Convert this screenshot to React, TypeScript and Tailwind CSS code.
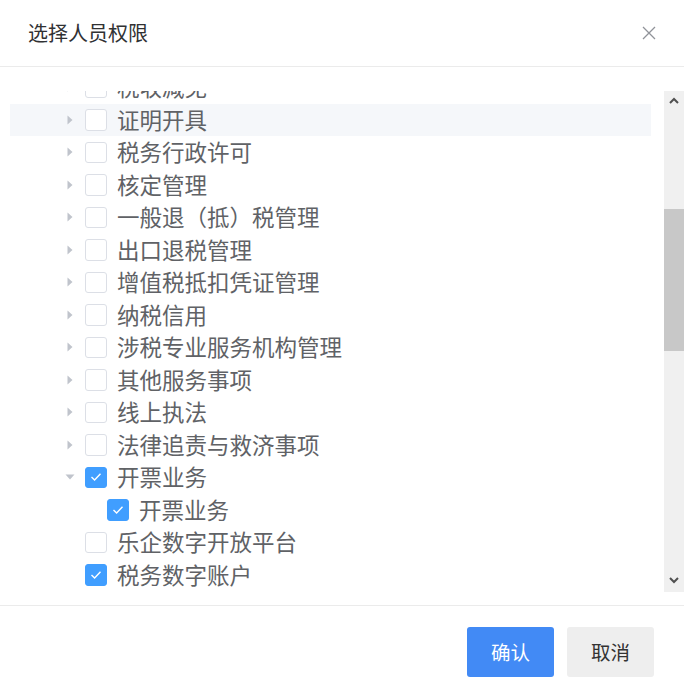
import React from "react";

type Node = {
  label: string;
  checked?: boolean;
  caret?: "right" | "down" | null;
  level?: number;
  active?: boolean;
};

const nodes: Node[] = [
  { label: "税收减免", caret: "right" },
  { label: "证明开具", caret: "right", active: true },
  { label: "税务行政许可", caret: "right" },
  { label: "核定管理", caret: "right" },
  { label: "一般退（抵）税管理", caret: "right" },
  { label: "出口退税管理", caret: "right" },
  { label: "增值税抵扣凭证管理", caret: "right" },
  { label: "纳税信用", caret: "right" },
  { label: "涉税专业服务机构管理", caret: "right" },
  { label: "其他服务事项", caret: "right" },
  { label: "线上执法", caret: "right" },
  { label: "法律追责与救济事项", caret: "right" },
  { label: "开票业务", caret: "down", checked: true },
  { label: "开票业务", caret: null, checked: true, level: 1 },
  { label: "乐企数字开放平台", caret: null },
  { label: "税务数字账户", caret: null, checked: true },
];

function Checkbox({ checked }: { checked?: boolean }) {
  return (
    <span
      className={`flex h-[21.5px] w-[21.5px] shrink-0 items-center justify-center rounded-[3px] border ${
        checked ? "border-[#409eff] bg-[#409eff]" : "border-[#dcdfe6] bg-white"
      }`}
    >
      {checked && (
        <svg width="12" height="10" viewBox="0 0 12 10" fill="none">
          <path d="M1.5 5 L4.6 8 L10.5 1.8" stroke="white" strokeWidth="1.4" />
        </svg>
      )}
    </span>
  );
}

function Caret({ dir }: { dir: "right" | "down" | null }) {
  return (
    <span className="flex w-[24px] shrink-0 items-center justify-center">
      {dir === "right" && (
        <svg width="6" height="10" viewBox="0 0 6 10">
          <path d="M0.5 0.5 L5.5 5 L0.5 9.5 Z" fill="#c0c4cc" />
        </svg>
      )}
      {dir === "down" && (
        <svg width="10" height="6" viewBox="0 0 10 6">
          <path d="M0.5 0.5 L9.5 0.5 L5 5.5 Z" fill="#c0c4cc" />
        </svg>
      )}
    </span>
  );
}

function TreeRow({ node }: { node: Node }) {
  return (
    <div
      className={`flex h-[32.5px] items-center ${
        node.active ? "bg-[#f5f7fa]" : ""
      } ${node.level ? "pl-[70px]" : "pl-[48px]"}`}
    >
      <Caret dir={node.caret ?? null} />
      <span className="ml-[3px]">
        <Checkbox checked={node.checked} />
      </span>
      <span className="-mt-[2px] ml-[10.5px] text-[22.5px] leading-none text-[#606266]">
        {node.label}
      </span>
    </div>
  );
}

function Scrollbar() {
  return (
    <div className="flex w-[20px] shrink-0 flex-col bg-[#f0f0f0]">
      <div className="flex h-[17px] items-center justify-center pt-[1px]">
        <svg width="10" height="7" viewBox="0 0 10 7">
          <path d="M1 6 L5 2 L9 6" stroke="#505050" strokeWidth="2" fill="none" />
        </svg>
      </div>
      <div className="h-[101px]" />
      <div className="h-[142px] bg-[#c8c8c8]" />
      <div className="flex-1" />
      <div className="flex h-[23px] items-center justify-center">
        <svg width="10" height="7" viewBox="0 0 10 7">
          <path d="M1 1 L5 5 L9 1" stroke="#505050" strokeWidth="2" fill="none" />
        </svg>
      </div>
    </div>
  );
}

export default function App() {
  return (
    <div
      className="h-[694px] w-[684px] overflow-hidden bg-white"
      style={{ fontFamily: '"Noto Sans CJK SC", "Noto Sans", sans-serif' }}
    >
      <div className="flex h-[67px] items-center justify-between border-b border-[#ebebeb] pl-[28px] pr-[28px]">
        <span className="text-[20px] leading-none text-[#303133]">选择人员权限</span>
        <svg width="14" height="14" viewBox="0 0 14 14">
          <path d="M1 1 L13 13 M13 1 L1 13" stroke="#909399" strokeWidth="1.3" />
        </svg>
      </div>

      <div className="flex pl-[10px] pt-[24px] pb-[13px]">
        <div className="h-[501px] flex-1 overflow-hidden">
          <div className="-mt-[20px]">
            {nodes.map((n, i) => (
              <TreeRow key={i} node={n} />
            ))}
          </div>
        </div>
        <div className="w-[13px] shrink-0" />
        <Scrollbar />
      </div>

      <div className="flex justify-end gap-[13px] border-t border-[#ebebeb] pr-[30px] pt-[21px]">
        <button className="flex h-[50px] w-[87px] items-center justify-center rounded-[3px] bg-[#428af5] text-[19.5px] text-white">
          确认
        </button>
        <button className="flex h-[50px] w-[87px] items-center justify-center rounded-[3px] bg-[#eeeeee] text-[19.5px] text-[#333333]">
          取消
        </button>
      </div>
    </div>
  );
}
